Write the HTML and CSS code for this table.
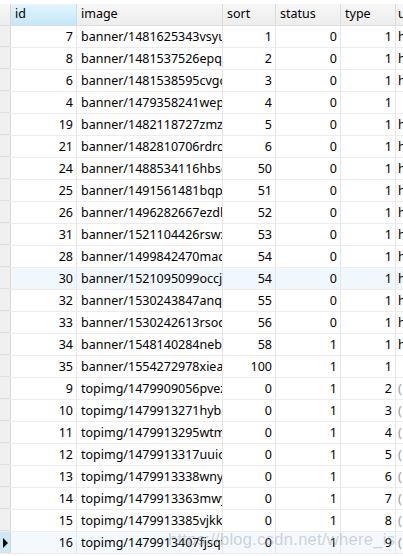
FILE: index.html
```html
<!DOCTYPE html>
<html>
<head>
<meta charset="utf-8">
<link rel="stylesheet" href="styles.css">
</head>
<body>
<div class="grid">
  <div class="row head">
    <div class="ind"></div>
    <div class="c id sel">id</div>
    <div class="c img">image</div>
    <div class="c sort">sort</div>
    <div class="c status">status</div>
    <div class="c type">type</div>
    <div class="c url">u</div>
  </div>
  <div class="row"><div class="ind"></div><div class="c id">7</div><div class="c img">banner/1481625343vsyuqw</div><div class="c sort">1</div><div class="c status">0</div><div class="c type">1</div><div class="c url">h</div></div>
  <div class="row"><div class="ind"></div><div class="c id">8</div><div class="c img">banner/1481537526epqrwe</div><div class="c sort">2</div><div class="c status">0</div><div class="c type">1</div><div class="c url">h</div></div>
  <div class="row"><div class="ind"></div><div class="c id">6</div><div class="c img">banner/1481538595cvgcab</div><div class="c sort">3</div><div class="c status">0</div><div class="c type">1</div><div class="c url">h</div></div>
  <div class="row"><div class="ind"></div><div class="c id">4</div><div class="c img">banner/1479358241weplaz</div><div class="c sort">4</div><div class="c status">0</div><div class="c type">1</div><div class="c url"></div></div>
  <div class="row"><div class="ind"></div><div class="c id">19</div><div class="c img">banner/1482118727zmzfqa</div><div class="c sort">5</div><div class="c status">0</div><div class="c type">1</div><div class="c url">h</div></div>
  <div class="row"><div class="ind"></div><div class="c id">21</div><div class="c img">banner/1482810706rdrqab</div><div class="c sort">6</div><div class="c status">0</div><div class="c type">1</div><div class="c url">h</div></div>
  <div class="row"><div class="ind"></div><div class="c id">24</div><div class="c img">banner/1488534116hbsgqa</div><div class="c sort">50</div><div class="c status">0</div><div class="c type">1</div><div class="c url">h</div></div>
  <div class="row"><div class="ind"></div><div class="c id">25</div><div class="c img">banner/1491561481bqpvqa</div><div class="c sort">51</div><div class="c status">0</div><div class="c type">1</div><div class="c url">h</div></div>
  <div class="row"><div class="ind"></div><div class="c id">26</div><div class="c img">banner/1496282667ezdlqa</div><div class="c sort">52</div><div class="c status">0</div><div class="c type">1</div><div class="c url">h</div></div>
  <div class="row"><div class="ind"></div><div class="c id">31</div><div class="c img">banner/1521104426rswxqa</div><div class="c sort">53</div><div class="c status">0</div><div class="c type">1</div><div class="c url">h</div></div>
  <div class="row"><div class="ind"></div><div class="c id">28</div><div class="c img">banner/1499842470madqa</div><div class="c sort">54</div><div class="c status">0</div><div class="c type">1</div><div class="c url">h</div></div>
  <div class="row hover"><div class="ind"></div><div class="c id">30</div><div class="c img">banner/1521095099occjqa</div><div class="c sort">54</div><div class="c status">0</div><div class="c type">1</div><div class="c url">h</div></div>
  <div class="row"><div class="ind"></div><div class="c id">32</div><div class="c img">banner/1530243847anqcqa</div><div class="c sort">55</div><div class="c status">0</div><div class="c type">1</div><div class="c url">h</div></div>
  <div class="row"><div class="ind"></div><div class="c id">33</div><div class="c img">banner/1530242613rsodqa</div><div class="c sort">56</div><div class="c status">0</div><div class="c type">1</div><div class="c url">h</div></div>
  <div class="row"><div class="ind"></div><div class="c id">34</div><div class="c img">banner/1548140284nebhqa</div><div class="c sort">58</div><div class="c status">1</div><div class="c type">1</div><div class="c url">h</div></div>
  <div class="row"><div class="ind"></div><div class="c id">35</div><div class="c img">banner/1554272978xieayq</div><div class="c sort">100</div><div class="c status">1</div><div class="c type">1</div><div class="c url"></div></div>
  <div class="row"><div class="ind"></div><div class="c id">9</div><div class="c img">topimg/1479909056pvezqa</div><div class="c sort">0</div><div class="c status">1</div><div class="c type">2</div><div class="c url null">(</div></div>
  <div class="row"><div class="ind"></div><div class="c id">10</div><div class="c img">topimg/1479913271hybaqa</div><div class="c sort">0</div><div class="c status">1</div><div class="c type">3</div><div class="c url null">(</div></div>
  <div class="row"><div class="ind"></div><div class="c id">11</div><div class="c img">topimg/1479913295wtmqa</div><div class="c sort">0</div><div class="c status">1</div><div class="c type">4</div><div class="c url null">(</div></div>
  <div class="row"><div class="ind"></div><div class="c id">12</div><div class="c img">topimg/1479913317uuioqa</div><div class="c sort">0</div><div class="c status">1</div><div class="c type">5</div><div class="c url null">(</div></div>
  <div class="row"><div class="ind"></div><div class="c id">13</div><div class="c img">topimg/1479913338wnyjqa</div><div class="c sort">0</div><div class="c status">1</div><div class="c type">6</div><div class="c url null">(</div></div>
  <div class="row"><div class="ind"></div><div class="c id">14</div><div class="c img">topimg/1479913363mwyqa</div><div class="c sort">0</div><div class="c status">1</div><div class="c type">7</div><div class="c url null">(</div></div>
  <div class="row"><div class="ind"></div><div class="c id">15</div><div class="c img">topimg/1479913385vjkkvq</div><div class="c sort">0</div><div class="c status">1</div><div class="c type">8</div><div class="c url null">(</div></div>
  <div class="row current"><div class="ind"><span class="tri"></span></div><div class="c id">16</div><div class="c img">topimg/1479913407fjsqfq</div><div class="c sort">0</div><div class="c status">1</div><div class="c type">9</div><div class="c url null">(</div></div>
</div>
<div class="watermark">https://blog.csdn.net/where_is</div>
</body>
</html>
```

FILE: styles.css
```css
html, body {
  margin: 0;
  padding: 0;
  background: #ffffff;
  overflow: hidden;
}
body {
  width: 403px;
  height: 556px;
  position: relative;
  font-family: "Noto Sans", "Liberation Sans", sans-serif;
  font-size: 12.5px;
  color: #000;
}
.grid {
  display: flex;
  flex-direction: column;
  width: 403px;
}
.row {
  display: grid;
  grid-template-columns: 11px 66px 146px 53px 65px 55px 1fr;
  height: 22px;
  border-bottom: 1px solid #ececec;
  box-sizing: border-box;
}
.row > div {
  border-right: 1px solid #e6e6e6;
  box-sizing: border-box;
  overflow: hidden;
  white-space: nowrap;
  line-height: 21px;
}
.row > div:last-child {
  border-right: none;
}
.c {
  padding: 0 3px 0 4px;
}
.id, .sort, .status, .type {
  text-align: right;
}
.ind {
  background: #f0f0f0;
  border-right: 1px solid #d6d6d6 !important;
  position: relative;
}
.row:not(.head) .ind {
  border-bottom: 1px solid #e0e0e0;
}
.head {
  height: 26px;
  border-top: 4px solid #ffffff;
  border-bottom: 1px solid #dedede;
  background: linear-gradient(#f7f7f7, #ededed);
}
.head > div {
  line-height: 20px;
  text-align: left;
  border-right: 1px solid #dcdcdc;
}
.head .ind {
  background: transparent;
}
.head .sel {
  background: linear-gradient(#e6f5fd, #c3e7f8);
  border-right: 1px solid #c9dfe9;
}
.hover > div.c {
  background: #f1f8fd;
}
.current > div.c {
  background: #f3f9fe;
}
.current .ind {
  background: #cfe8f8;
}
.tri {
  position: absolute;
  left: 3px;
  top: 6px;
  width: 0;
  height: 0;
  border-top: 5px solid transparent;
  border-bottom: 5px solid transparent;
  border-left: 5px solid #000;
}
.url {
  padding-left: 2px;
  padding-right: 0;
}
.null {
  color: #9a9a9a;
}
.watermark {
  position: absolute;
  left: 168px;
  top: 530px;
  font-family: "Liberation Sans", sans-serif;
  font-size: 16.5px;
  color: rgba(160, 160, 160, 0.45);
  letter-spacing: 0.3px;
  white-space: nowrap;
}
```
